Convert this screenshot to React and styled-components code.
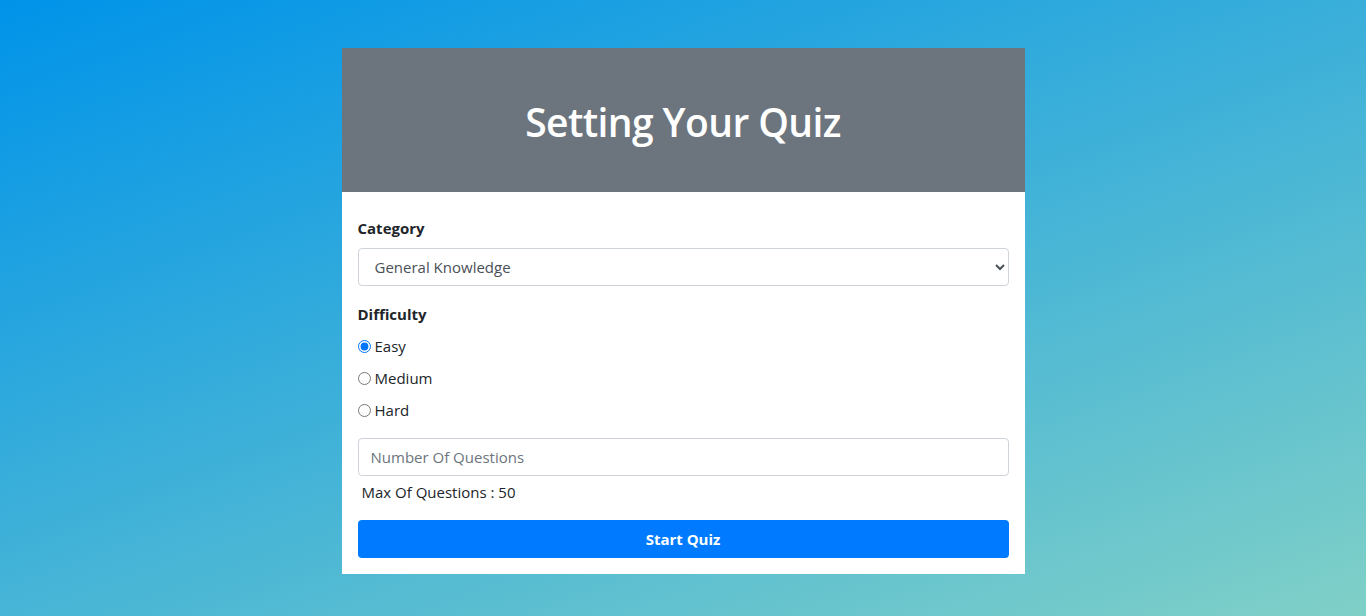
import React, { useState } from 'react'
import styled, { createGlobalStyle } from 'styled-components'

const GlobalStyle = createGlobalStyle`
  html, body {
    margin: 0;
    padding: 0;
  }
  body {
    min-height: 100vh;
    font-family: 'Open Sans', 'Noto Sans', sans-serif;
    color: #212529;
    background: linear-gradient(160deg, #0093e9 0%, #80d0c7 100%);
    background-attachment: fixed;
  }
  * {
    box-sizing: border-box;
  }
`

const Page = styled.div`
  display: flex;
  justify-content: center;
  padding: 48px 0;
`

const Card = styled.div`
  width: 683px;
  display: flex;
  flex-flow: column;
  background: white;
`

const Header = styled.div`
  height: 144px;
  padding-top: 4px;
  display: flex;
  align-items: center;
  justify-content: center;
  background: #6c757d;
`

const Title = styled.h1`
  margin: 0;
  font: 600 39px/1.2 'Open Sans', 'Noto Sans', sans-serif;
  letter-spacing: -0.6px;
  color: white;
`

const Body = styled.form`
  display: flex;
  flex-flow: column;
  padding: 24px 16px 16px;
`

const Label = styled.label`
  display: block;
  margin-bottom: 8px;
  font: 700 15px/24px 'Open Sans', 'Noto Sans', sans-serif;
  color: #212529;
`

const Select = styled.select`
  width: 100%;
  height: 38px;
  margin-bottom: 16px;
  border: 1px solid #ced4da;
  border-radius: 4px;
  padding: 0 10px 0 12px;
  font: 400 15px 'Open Sans', 'Noto Sans', sans-serif;
  color: #495057;
  background: white;
`

const Radios = styled.div`
  display: flex;
  flex-flow: column;
  gap: 8px;
  margin-bottom: 16px;
`

const RadioRow = styled.label`
  display: flex;
  align-items: center;
  height: 24px;
  font: 400 15px/24px 'Open Sans', 'Noto Sans', sans-serif;
  color: #212529;

  input {
    width: 13px;
    height: 13px;
    margin: 0 4px 0 0;
    accent-color: #0075ff;
  }
`

const Input = styled.input`
  width: 100%;
  height: 38px;
  border: 1px solid #ced4da;
  border-radius: 4px;
  padding: 0 12px;
  font: 400 15px 'Open Sans', 'Noto Sans', sans-serif;
  color: #495057;

  &::placeholder {
    color: #6c757d;
  }
`

const Hint = styled.div`
  margin-top: 4px;
  padding-left: 4px;
  font: 400 15px/24px 'Open Sans', 'Noto Sans', sans-serif;
  color: #212529;
`

const Button = styled.button`
  margin-top: 16px;
  height: 38px;
  border: none;
  border-radius: 4px;
  font: 700 15px 'Open Sans', 'Noto Sans', sans-serif;
  color: white;
  background: #007bff;
`

const levels = ['Easy', 'Medium', 'Hard']

export default function App() {
  const [level, setLevel] = useState('Easy')

  return (
    <>
      <GlobalStyle />
      <Page>
        <Card>
          <Header>
            <Title>Setting Your Quiz</Title>
          </Header>
          <Body onSubmit={e => e.preventDefault()}>
            <Label>Category</Label>
            <Select defaultValue="9">
              <option value="9">General Knowledge</option>
              <option value="10">Entertainment: Books</option>
              <option value="11">Entertainment: Film</option>
            </Select>
            <Label>Difficulty</Label>
            <Radios>
              {levels.map(name => (
                <RadioRow key={name}>
                  <input
                    type="radio"
                    name="difficulty"
                    checked={level === name}
                    onChange={() => setLevel(name)}
                  />
                  {name}
                </RadioRow>
              ))}
            </Radios>
            <Input type="number" placeholder="Number Of Questions" />
            <Hint>Max Of Questions : 50</Hint>
            <Button type="submit">Start Quiz</Button>
          </Body>
        </Card>
      </Page>
    </>
  )
}
